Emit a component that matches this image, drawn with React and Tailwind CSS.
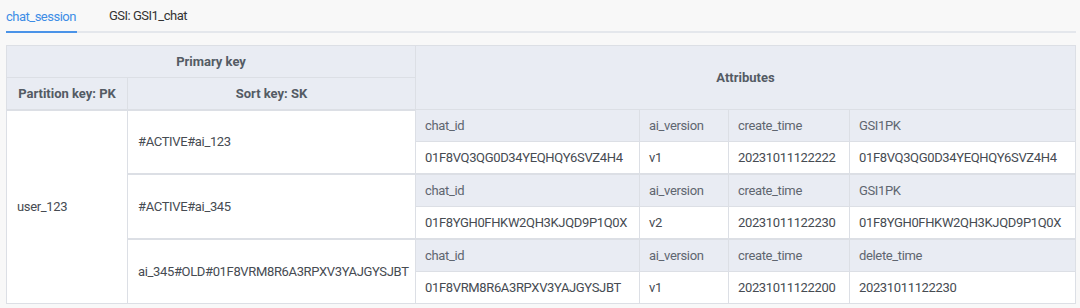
import React from "react";

const groups = [
  {
    sk: "#ACTIVE#ai_123",
    keys: ["chat_id", "ai_version", "create_time", "GSI1PK"],
    vals: ["01F8VQ3QG0D34YEQHQY6SVZ4H4", "v1", "20231011122222", "01F8VQ3QG0D34YEQHQY6SVZ4H4"],
  },
  {
    sk: "#ACTIVE#ai_345",
    keys: ["chat_id", "ai_version", "create_time", "GSI1PK"],
    vals: ["01F8YGH0FHKW2QH3KJQD9P1Q0X", "v2", "20231011122230", "01F8YGH0FHKW2QH3KJQD9P1Q0X"],
  },
  {
    sk: "ai_345#OLD#01F8VRM8R6A3RPXV3YAJGYSJBT",
    keys: ["chat_id", "ai_version", "create_time", "delete_time"],
    vals: ["01F8VRM8R6A3RPXV3YAJGYSJBT", "v1", "20231011122200", "20231011122230"],
  },
];

export default function App() {
  return (
    <div
      className="w-[1080px] h-[308px] bg-[#f8f8f8] overflow-hidden text-[13px]"
      style={{ fontFamily: "Roboto, 'Liberation Sans', sans-serif" }}
    >
      <div className="mx-[6px] w-[1070px] flex items-end h-[33px] border-b-2 border-[#e4e7ec] tracking-[-0.5px]">
        <div className="h-full flex items-center pr-[1px] text-[#3d8de6] -mb-[2px] border-b-2 border-[#4a93e8] pt-[1px]">
          chat_session
        </div>
        <div className="h-full flex items-center ml-[32px] text-[#333] pt-[1px]">GSI: GSI1_chat</div>
      </div>
      <div className="pt-[12px] pl-[6px]">
        <table className="table-fixed border-collapse bg-white w-[1069px]">
          <colgroup>
            <col className="w-[121px]" />
            <col className="w-[288px]" />
            <col className="w-[224px]" />
            <col className="w-[89px]" />
            <col className="w-[121px]" />
            <col className="w-[226px]" />
          </colgroup>
          <thead>
            <tr className="h-[32px]">
              <th colSpan={2} className="bg-[#e9ecf3] border border-[#dcdfe5] font-bold text-[#545b64] text-center">
                Primary key
              </th>
              <th
                colSpan={4}
                rowSpan={2}
                className="bg-[#e9ecf3] border border-[#dcdfe5] font-bold text-[#545b64] text-center"
              >
                Attributes
              </th>
            </tr>
            <tr className="h-[32px]">
              <th className="bg-[#e9ecf3] border border-[#dcdfe5] border-b-2 font-bold text-[#545b64] text-center">
                Partition key: PK
              </th>
              <th className="bg-[#e9ecf3] border border-[#dcdfe5] border-b-2 font-bold text-[#545b64] text-center">
                Sort key: SK
              </th>
            </tr>
          </thead>
          <tbody className="tracking-[-0.35px]">
            {groups.map((g, gi) => (
              <React.Fragment key={gi}>
                <tr className="h-[32.4px]">
                  {gi === 0 && (
                    <td rowSpan={6} className="border border-[#dcdfe5] pl-[10px] text-[#464b52] align-middle">
                      user_123
                    </td>
                  )}
                  <td
                    rowSpan={2}
                    className={`border border-[#dcdfe5] pl-[10px] text-[#464b52] align-middle ${gi > 0 ? "border-t-2" : ""}`}
                  >
                    {g.sk}
                  </td>
                  {g.keys.map((k, i) => (
                    <td
                      key={i}
                      className={`bg-[#e9ecf3] border border-[#dcdfe5] pl-[9px] text-[#5f6670] ${gi > 0 ? "border-t-2" : ""}`}
                    >
                      {k}
                    </td>
                  ))}
                </tr>
                <tr className="h-[32.4px]">
                  {g.vals.map((v, i) => (
                    <td key={i} className="border border-[#dcdfe5] pl-[9px] text-[#464b52]">
                      {v}
                    </td>
                  ))}
                </tr>
              </React.Fragment>
            ))}
          </tbody>
        </table>
      </div>
    </div>
  );
}
